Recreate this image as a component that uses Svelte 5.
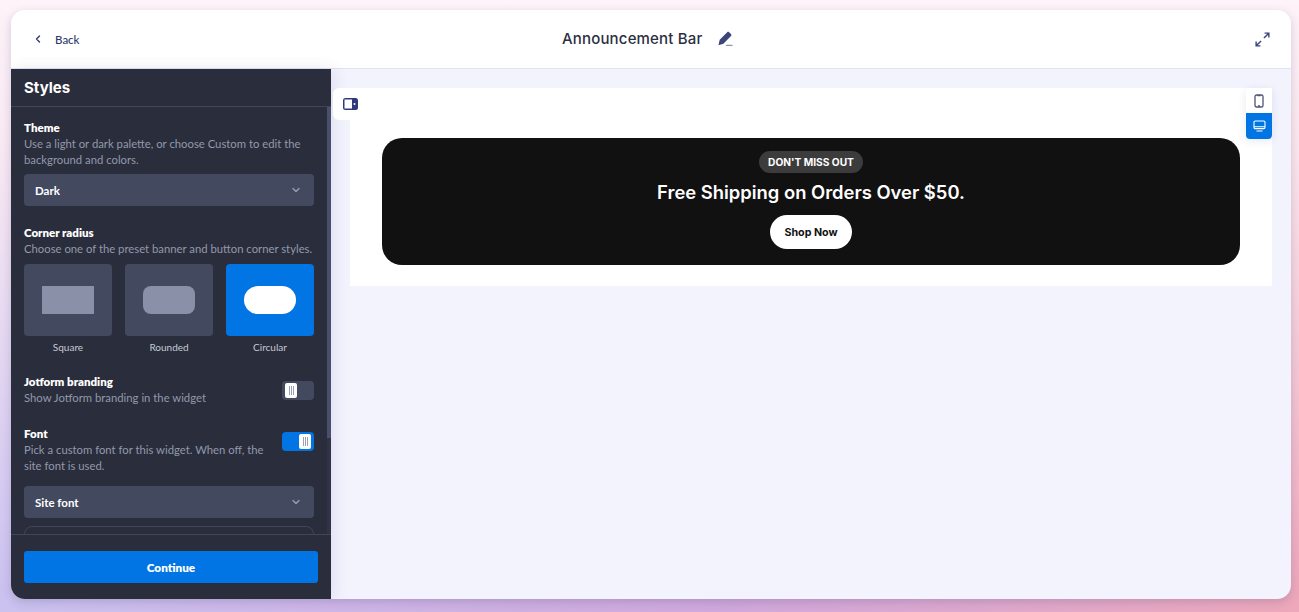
<script>
  const corners = [
    { label: 'Square', shape: 'square' },
    { label: 'Rounded', shape: 'rounded' },
    { label: 'Circular', shape: 'circular', active: true }
  ];
</script>

{#snippet chevron()}
  <svg class="chevron" width="10" height="10" viewBox="0 0 10 10" fill="none">
    <path d="M2 3.5 5 6.5 8 3.5" stroke="#9aa1b5" stroke-width="1.3" stroke-linecap="round" stroke-linejoin="round" />
  </svg>
{/snippet}

{#snippet knob()}
  <span class="knob"><i></i><i></i><i></i></span>
{/snippet}

<div class="page">
  <div class="card">
    <header class="topbar">
      <a class="back" href="#back">
        <svg width="8" height="10" viewBox="0 0 8 10" fill="none">
          <path d="M5.5 2 2.5 5 5.5 8" stroke="#2f3a6b" stroke-width="1.4" stroke-linecap="round" stroke-linejoin="round" />
        </svg>
        <span>Back</span>
      </a>
      <div class="title">
        <span>Announcement Bar</span>
        <svg width="16" height="16" viewBox="0 0 16 16">
          <path d="M10.2 1.2c.6-.5 1.4-.5 1.9 0l1.9 1.9c.5.5.5 1.3 0 1.9L6.4 12.7 1.5 14.3 2.7 8.8z" fill="#3b4578" />
          <path d="M9.5 14.3h5.5" stroke="#8d93ad" stroke-width="1.3" stroke-linecap="round" />
        </svg>
      </div>
      <svg class="expand" width="15" height="15" viewBox="0 0 16 16" fill="none" stroke="#3b4578" stroke-width="1.5">
        <path d="M9.5 6.5 14.5 1.5M10.2 1.2h4.6v4.6" />
        <path d="M6.5 9.5 1.5 14.5M1.2 10.2v4.6h4.6" />
      </svg>
    </header>

    <div class="body">
      <aside class="sidebar">
        <h2 class="side-title">Styles</h2>
        <div class="scroll">
          <div class="scroll-inner">
            <section class="group theme">
              <h3>Theme</h3>
              <p>Use a light or dark palette, or choose Custom to edit the background and colors.</p>
              <div class="select"><span>Dark</span>{@render chevron()}</div>
            </section>

            <section class="group corners">
              <h3>Corner radius</h3>
              <p>Choose one of the preset banner and button corner styles.</p>
              <div class="tiles">
                {#each corners as c}
                  <div class="tile-wrap">
                    <div class="tile" class:active={c.active}><span class="shape {c.shape}"></span></div>
                    <span class="tile-label">{c.label}</span>
                  </div>
                {/each}
              </div>
            </section>

            <section class="group row branding">
              <div>
                <h3>Jotform branding</h3>
                <p>Show Jotform branding in the widget</p>
              </div>
              <div class="toggle">{@render knob()}</div>
            </section>

            <section class="group font">
              <div class="row">
                <div class="font-text">
                  <h3>Font</h3>
                  <p>Pick a custom font for this widget. When off, the site font is used.</p>
                </div>
                <div class="toggle on">{@render knob()}</div>
              </div>
              <div class="select"><span>Site font</span>{@render chevron()}</div>
              <div class="cut-box"></div>
            </section>
          </div>
          <div class="scrollbar"><div class="thumb"></div></div>
        </div>
        <div class="footer">
          <button class="continue">Continue</button>
        </div>
      </aside>

      <main class="canvas">
        <div class="preview">
          <div class="side-tab">
            <svg width="15" height="12" viewBox="0 0 15 12">
              <rect width="15" height="12" rx="2.5" fill="#2f3a78" />
              <rect x="1.5" y="1.5" width="7.5" height="9" fill="#fff" />
              <circle cx="11.5" cy="6" r="1" fill="#fff" />
            </svg>
          </div>
          <div class="devices">
            <div class="device">
              <svg width="10" height="14" viewBox="0 0 10 14" fill="none" stroke="#4c5475" stroke-width="1.3">
                <rect x="1" y="1" width="8" height="12" rx="1.6" />
                <path d="M3.5 1.6h3M4 12h2" />
              </svg>
            </div>
            <div class="device active">
              <svg width="13" height="12" viewBox="0 0 13 12" fill="none" stroke="#fff" stroke-width="1.1">
                <rect x="1" y="1" width="11" height="7.6" rx="1.2" />
                <path d="M3.5 11h6M1 6.8h11" />
              </svg>
            </div>
          </div>
          <div class="banner">
            <span class="pill">DON'T MISS OUT</span>
            <strong class="headline">Free Shipping on Orders Over $50.</strong>
            <button class="shop">Shop Now</button>
          </div>
        </div>
      </main>
    </div>
  </div>
</div>

<style>
  :global(body) {
    margin: 0;
    font-family: "Lato", "Open Sans", sans-serif;
  }

  .page {
    box-sizing: border-box;
    width: 1299px;
    height: 612px;
    padding: 10px 8px 13px 11px;
    overflow: hidden;
    background: linear-gradient(90deg, #cbc2f0 0%, #d0a8dd 55%, #eea8bb 100%);
    position: relative;
  }

  .page::before {
    content: '';
    position: absolute;
    inset: 0;
    background: linear-gradient(180deg, #fdf3f8 0%, rgba(253, 236, 243, 0.9) 25%, rgba(253, 236, 243, 0) 96%);
  }

  .card {
    position: relative;
    height: 100%;
    border-radius: 14px;
    background: #f3f3fe;
    overflow: hidden;
    display: flex;
    flex-direction: column;
    box-shadow: 0 3px 10px rgba(70, 70, 110, 0.22);
  }

  .topbar {
    flex: none;
    box-sizing: border-box;
    height: 59px;
    background: #fff;
    border-bottom: 1px solid #e0e1f2;
    display: flex;
    align-items: center;
    justify-content: space-between;
    padding: 0 21px 0 23px;
    position: relative;
  }

  .back {
    display: flex;
    align-items: center;
    gap: 13px;
    color: #2f3a6b;
    font-size: 11.5px;
    font-weight: 500;
    text-decoration: none;
  }

  .title {
    position: absolute;
    left: 551px;
    top: 20px;
    display: flex;
    align-items: center;
    gap: 15px;
    color: #2b2f42;
    font-family: "Inter", sans-serif;
    font-size: 15px;
    line-height: 18px;
    font-weight: 500;
    letter-spacing: 0.17px;
  }

  .body {
    flex: 1;
    min-height: 0;
    display: flex;
  }

  .sidebar {
    flex: none;
    position: relative;
    z-index: 1;
    width: 320px;
    background: #2a2d3c;
    color: #fff;
    display: flex;
    flex-direction: column;
    box-shadow: 3px 0 14px rgba(70, 70, 130, 0.12);
  }

  .side-title {
    flex: none;
    box-sizing: border-box;
    height: 38px;
    margin: 0;
    padding: 9px 13px 0;
    font-family: "Inter", sans-serif;
    font-size: 15px;
    line-height: 20px;
    font-weight: 700;
    border-bottom: 1px solid #41455a;
  }

  .scroll {
    flex: 1;
    min-height: 0;
    display: flex;
    overflow: hidden;
    border-bottom: 1px solid #41455a;
  }

  .scroll-inner {
    flex: 1;
    box-sizing: border-box;
    padding: 13px 13px 0;
  }

  .scrollbar {
    flex: none;
    width: 4px;
    background: #2f3344;
  }

  .thumb {
    height: 331px;
    background: #4a4f6c;
  }

  .group h3 {
    margin: 0;
    font-size: 11.5px;
    line-height: 16px;
    font-weight: 800;
  }

  .group p {
    margin: 0;
    font-size: 11.3px;
    line-height: 16px;
    color: #9299ab;
  }

  .select {
    box-sizing: border-box;
    height: 32px;
    margin-top: 6px;
    padding: 0 13px 0 11px;
    display: flex;
    align-items: center;
    justify-content: space-between;
    background: #434a60;
    border-radius: 4px;
    font-size: 11.5px;
    font-weight: 700;
  }

  .corners {
    margin-top: 19px;
  }

  .tiles {
    display: grid;
    grid-template-columns: repeat(3, 88px);
    justify-content: space-between;
    margin-top: 7px;
  }

  .tile-wrap {
    display: flex;
    flex-direction: column;
    align-items: center;
    gap: 5px;
  }

  .tile {
    width: 88px;
    height: 72px;
    border-radius: 4px;
    background: #434a60;
    display: flex;
    align-items: center;
    justify-content: center;
  }

  .tile.active {
    background: #0075e3;
  }

  .shape {
    width: 52px;
    height: 28px;
    background: #8a90a7;
  }

  .shape.rounded {
    border-radius: 8px;
  }

  .shape.circular {
    border-radius: 14px;
    background: #fff;
  }

  .tile-label {
    font-size: 10px;
    line-height: 13px;
    color: #c6cad6;
  }

  .row {
    display: flex;
    align-items: flex-start;
    justify-content: space-between;
  }

  .group.branding {
    margin-top: 20px;
    align-items: center;
  }

  .font {
    margin-top: 20px;
  }

  .font-text {
    width: 245px;
  }

  .font .toggle {
    margin-top: 6px;
  }

  .font .select {
    margin-top: 12px;
  }

  .cut-box {
    height: 40px;
    margin-top: 8px;
    border: 1px solid #41455a;
    border-radius: 8px;
  }

  .toggle {
    flex: none;
    box-sizing: border-box;
    width: 32px;
    height: 19px;
    padding: 2px 3px;
    border-radius: 4px;
    background: #434a60;
    display: flex;
  }

  .toggle.on {
    background: #0075e3;
    justify-content: flex-end;
  }

  .knob {
    width: 12px;
    height: 15px;
    border-radius: 2px;
    background: #fff;
    display: flex;
    align-items: center;
    justify-content: center;
    gap: 1px;
  }

  .knob i {
    width: 1px;
    height: 9px;
    background: #9aa0b5;
  }

  .footer {
    flex: none;
    box-sizing: border-box;
    height: 64px;
    padding: 16px 13px;
  }

  .continue {
    display: block;
    width: 294px;
    height: 32px;
    padding: 0;
    border: 0;
    border-radius: 3px;
    background: #0075e3;
    color: #fff;
    font-family: inherit;
    font-size: 11.7px;
    font-weight: 800;
  }

  .canvas {
    flex: 1;
    min-width: 0;
    padding: 19px 19px 0;
  }

  .preview {
    position: relative;
    z-index: 2;
    box-sizing: border-box;
    height: 198px;
    padding: 50px 32px 0;
    background: #fff;
  }

  .side-tab {
    position: absolute;
    left: -17px;
    top: 0;
    width: 36px;
    height: 32px;
    box-sizing: border-box;
    padding: 10px 0 0 10px;
    line-height: 0;
    background: #fff;
    border-radius: 6px 0 0 6px;
  }

  .devices {
    position: absolute;
    right: 0;
    top: 0;
    width: 26px;
    box-shadow: 0 2px 8px rgba(60, 70, 130, 0.12);
    border-radius: 4px;
    overflow: hidden;
  }

  .device {
    height: 25px;
    display: flex;
    align-items: center;
    justify-content: center;
    background: #fff;
  }

  .device.active {
    background: #0075e3;
    height: 26px;
  }

  .banner {
    box-sizing: border-box;
    height: 127px;
    padding-top: 13px;
    border-radius: 20px;
    background: #111;
    color: #fff;
    display: flex;
    flex-direction: column;
    align-items: center;
    font-family: "Inter", sans-serif;
  }

  .pill {
    box-sizing: border-box;
    height: 22px;
    padding: 0 9px;
    border-radius: 11px;
    background: #3c3c3c;
    font-size: 10.2px;
    line-height: 22px;
    font-weight: 700;
  }

  .headline {
    margin-top: 7px;
    font-size: 18.4px;
    line-height: 24px;
    font-weight: 600;
  }

  .shop {
    box-sizing: border-box;
    width: 82px;
    height: 34px;
    margin-top: 11px;
    padding: 0;
    border: 0;
    border-radius: 17px;
    background: #fff;
    color: #111;
    font-family: inherit;
    font-size: 10.7px;
    font-weight: 700;
  }
</style>
